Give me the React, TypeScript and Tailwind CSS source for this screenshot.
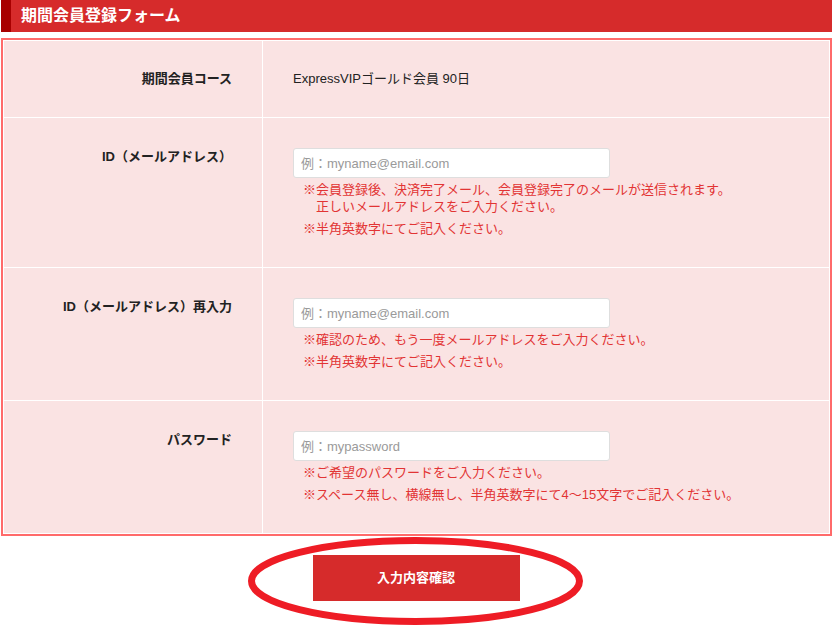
import React from 'react';

const FONT = "font-['Liberation_Sans','Noto_Sans_CJK_JP',sans-serif]";

type Row = {
  label: string;
  placeholder?: string;
  value?: string;
  notes?: string[];
};

const rows: Row[] = [
  { label: '期間会員コース', value: 'ExpressVIPゴールド会員 90日' },
  {
    label: 'ID（メールアドレス）',
    placeholder: '例：myname@email.com',
    notes: [
      '※会員登録後、決済完了メール、会員登録完了のメールが送信されます。正しいメールアドレスをご入力ください。',
      '※半角英数字にてご記入ください。',
    ],
  },
  {
    label: 'ID（メールアドレス）再入力',
    placeholder: '例：myname@email.com',
    notes: ['※確認のため、もう一度メールアドレスをご入力ください。', '※半角英数字にてご記入ください。'],
  },
  {
    label: 'パスワード',
    placeholder: '例：mypassword',
    notes: ['※ご希望のパスワードをご入力ください。', '※スペース無し、横線無し、半角英数字にて4～15文字でご記入ください。'],
  },
];

const App: React.FC = () => {
  return (
    <div className={`${FONT} w-[834px] h-[638px] bg-white pl-px pr-[2px] relative overflow-hidden`}>
      <div className="h-[32px] bg-[#d62b2b] border-l-[10px] border-[#a80000] flex items-center pl-[10px]">
        <h1 className="text-white text-[16px] font-bold">期間会員登録フォーム</h1>
      </div>

      <div className="mt-[6px] border-2 border-[#ff6a6a] bg-white p-px">
        <div className="grid grid-cols-[258px_1fr] gap-px">
          {rows.map((r, i) => (
            <React.Fragment key={i}>
              <div
                className={`bg-[#fae3e3] py-[30px] pr-[30px] text-right text-[13px] font-bold text-[#222] ${
                  r.value ? 'leading-[16px]' : 'leading-[18px]'
                }`}
              >
                {r.label}
              </div>
              <div className="bg-[#fae3e3] py-[30px] pl-[30px] text-[13px] leading-[16px] text-[#222]">
                {r.value && <div>{r.value}</div>}
                {r.placeholder && (
                  <>
                    <input
                      type="text"
                      placeholder={r.placeholder}
                      className="block w-[317px] h-[30px] bg-white border border-[#dedede] rounded-[3px] px-[7px] text-[13px] placeholder:text-[#9a9a9a] outline-none"
                    />
                    <div className="mt-[3px] pl-[10px] w-[450px]">
                      {r.notes?.map((n, j) => (
                        <p key={j} className="text-[#e23434] text-[13px] leading-[17px] pl-[13px] -indent-[13px] mt-[5px] first:mt-0">
                          {n}
                        </p>
                      ))}
                    </div>
                  </>
                )}
              </div>
            </React.Fragment>
          ))}
        </div>
      </div>

      <div className="flex justify-center mt-[19px]">
        <button className="w-[207px] h-[46px] bg-[#d62b2b] text-white text-[13px] font-bold ml-[-1px]">入力内容確認</button>
      </div>

      <svg className="absolute left-[244px] top-[533px] pointer-events-none" width="344" height="96" viewBox="0 0 344 96">
        <ellipse cx="171.5" cy="48" rx="164" ry="40.5" fill="none" stroke="#ee1c25" strokeWidth="7" />
      </svg>
    </div>
  );
};

export default App;
